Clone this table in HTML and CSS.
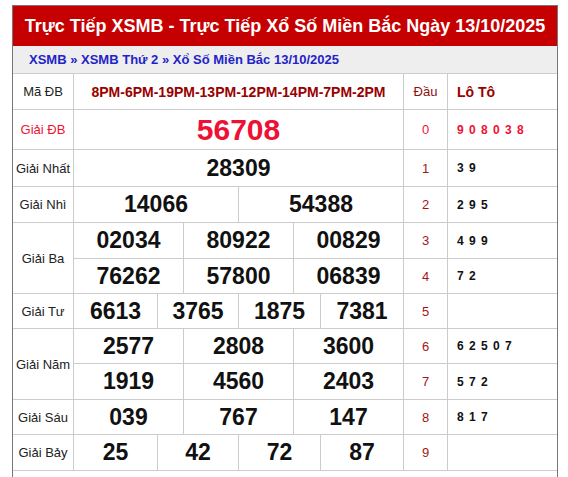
FILE: index.html
```html
<!DOCTYPE html>
<html lang="vi">
<head>
<meta charset="utf-8">
<title>XSMB 13/10/2025</title>
<link rel="stylesheet" href="styles.css">
</head>
<body>
<div class="box">
  <h1 class="title">Trực Tiếp XSMB - Trực Tiếp Xổ Số Miền Bắc Ngày 13/10/2025</h1>
  <div class="crumb"><a href="#">XSMB</a> » <a href="#">XSMB Thứ 2</a> » <a href="#">Xổ Số Miền Bắc 13/10/2025</a></div>
  <div class="kq">
    <div class="c lbl">Mã ĐB</div>
    <div class="c ma">8PM-6PM-19PM-13PM-12PM-14PM-7PM-2PM</div>
    <div class="c dau head">Đầu</div>
    <div class="c loto head">Lô Tô</div>

    <div class="c lbl red">Giải ĐB</div>
    <div class="c db">56708</div>
    <div class="c dau red">0</div>
    <div class="c loto red">9 0 8 0 3 8</div>

    <div class="c lbl">Giải Nhất</div>
    <div class="c num">28309</div>
    <div class="c dau">1</div>
    <div class="c loto">3 9</div>

    <div class="c lbl">Giải Nhì</div>
    <div class="c multi two"><span>14066</span><span>54388</span></div>
    <div class="c dau">2</div>
    <div class="c loto">2 9 5</div>

    <div class="c lbl span2">Giải Ba</div>
    <div class="c multi three"><span>02034</span><span>80922</span><span>00829</span></div>
    <div class="c dau">3</div>
    <div class="c loto">4 9 9</div>
    <div class="c multi three"><span>76262</span><span>57800</span><span>06839</span></div>
    <div class="c dau">4</div>
    <div class="c loto">7 2</div>

    <div class="c lbl">Giải Tư</div>
    <div class="c multi four"><span>6613</span><span>3765</span><span>1875</span><span>7381</span></div>
    <div class="c dau">5</div>
    <div class="c loto"></div>

    <div class="c lbl span2">Giải Năm</div>
    <div class="c multi three"><span>2577</span><span>2808</span><span>3600</span></div>
    <div class="c dau">6</div>
    <div class="c loto">6 2 5 0 7</div>
    <div class="c multi three"><span>1919</span><span>4560</span><span>2403</span></div>
    <div class="c dau">7</div>
    <div class="c loto">5 7 2</div>

    <div class="c lbl">Giải Sáu</div>
    <div class="c multi three"><span>039</span><span>767</span><span>147</span></div>
    <div class="c dau">8</div>
    <div class="c loto">8 1 7</div>

    <div class="c lbl">Giải Bảy</div>
    <div class="c multi four"><span>25</span><span>42</span><span>72</span><span>87</span></div>
    <div class="c dau">9</div>
    <div class="c loto"></div>
  </div>
  <div class="foot"></div>
</div>
</body>
</html>
```

FILE: styles.css
```css
* { box-sizing: border-box; }
html, body { margin: 0; padding: 0; background: #fff; }
body { font-family: "Liberation Sans", Arial, sans-serif; color: #222; }

.box {
  width: 546px;
  margin: 5px 0 0 12px;
  border: 1px solid #777;
  border-bottom: none;
  background: #fff;
}

.title {
  margin: 0;
  height: 40px;
  line-height: 40px;
  background: #c60000;
  color: #fff;
  font-size: 18px;
  font-weight: bold;
  text-align: center;
  white-space: nowrap;
}

.crumb {
  height: 28px;
  line-height: 27px;
  padding-left: 16px;
  background: #eeeeee;
  border-bottom: 1px solid #cccccc;
  font-size: 13px;
  font-weight: bold;
  color: #2323c8;
}
.crumb a { color: #2323c8; text-decoration: none; }

.kq {
  display: grid;
  grid-template-columns: 60px 329px 43px 109px;
  grid-template-rows: 35px 39px 36px 35px 35px 34px 34px 34px 35px 34px 35px;
  gap: 1px;
  background: #cccccc;
  border-bottom: 1px solid #cccccc;
}

.c {
  background: #fff;
  display: flex;
  align-items: center;
  justify-content: center;
  white-space: nowrap;
}

.lbl { font-size: 13px; color: #222; }
.span2 { grid-row: span 2; }
.red { color: #ee1133 !important; }

.ma { font-size: 14px; font-weight: bold; color: #990000; }

.dau { font-size: 13px; color: #a31515; }
.dau.head { color: #8b1010; }

.loto {
  justify-content: flex-start;
  padding-left: 9px;
  font-size: 12px;
  font-weight: bold;
  letter-spacing: 1px;
  color: #111;
}
.loto.head { font-size: 14px; letter-spacing: 0; color: #990000; }

.db { font-size: 30px; font-weight: bold; color: #ee1133; }
.num { font-size: 23px; font-weight: bold; color: #111; }

.multi {
  display: grid;
  grid-template-rows: 1fr;
  align-items: stretch;
  gap: 1px;
  background: #cccccc;
}
.multi span {
  background: #fff;
  display: flex;
  align-items: center;
  justify-content: center;
  font-size: 23px;
  font-weight: bold;
  color: #111;
}
.two { grid-template-columns: 1fr 1fr; }
.three { grid-template-columns: 1fr 1fr 1fr; }
.four { grid-template-columns: 83px 80px 81px 82px; }

.foot { height: 30px; }
```
